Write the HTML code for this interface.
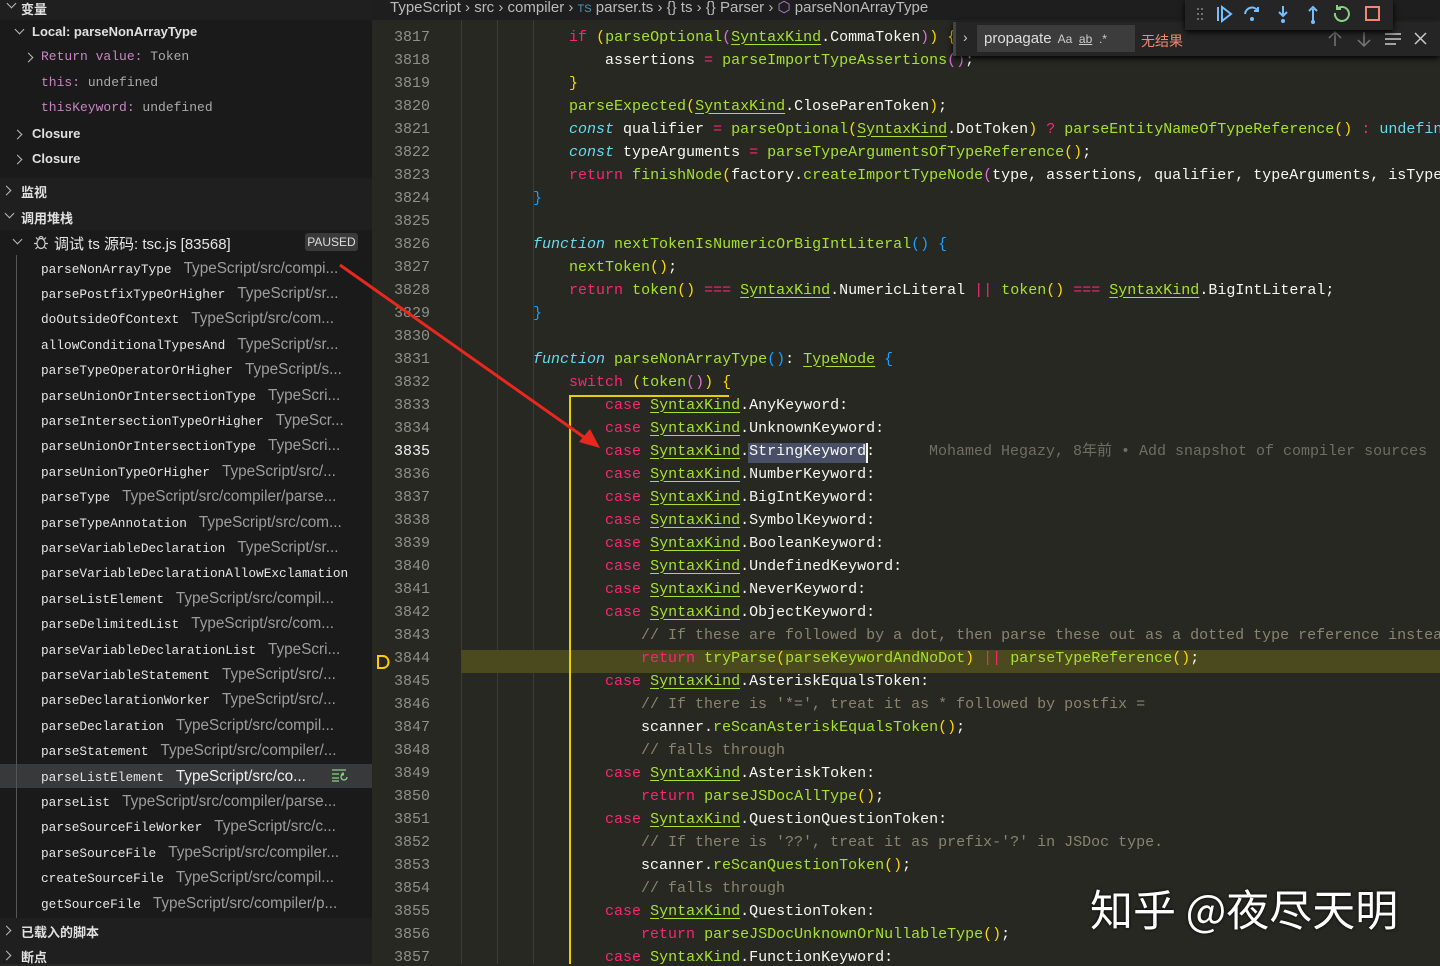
<!DOCTYPE html>
<html><head><meta charset="utf-8">
<style>
*{margin:0;padding:0;box-sizing:border-box}
body{width:1440px;height:964px;overflow:hidden;background:#272822;position:relative;font-family:"Liberation Sans","Noto Sans CJK SC",sans-serif}
#side{position:absolute;left:0;top:0;width:372px;height:964px;background:#1f1f1f}
.a{position:absolute;white-space:pre}
.h{font-weight:bold;font-size:13px;color:#e0e0e0}
.chev{position:absolute;width:7px;height:7px;border-right:1.5px solid #bbb;border-bottom:1.5px solid #bbb}
.cr{transform:rotate(-45deg)}
.cd{transform:rotate(45deg)}
.m{font-family:"Liberation Mono",monospace}
.it{position:absolute;left:41px;height:25px;line-height:25px;white-space:pre;font-size:15.3px;color:#9d9d9d}
.it b{font-weight:normal;font-family:"Liberation Mono",monospace;font-size:12.8px;color:#e6e6e6;margin-right:12px}
#ed{position:absolute;left:372px;top:20px;width:1068px;height:944px;background:#272822;overflow:hidden}
.ln{position:absolute;left:0;width:58px;text-align:right;font-family:"Liberation Mono",monospace;font-size:15px;color:#8f908a;height:23px;line-height:23px}
.cl{position:absolute;left:89px;font-family:"Liberation Mono",monospace;font-size:15px;color:#f8f8f2;height:23px;line-height:23px;white-space:pre}
.k{color:#f92672}.f{color:#a6e22e}.c{color:#66d9ef;font-style:italic}.s{color:#a6e22e;text-decoration:underline;text-decoration-color:#a6e22e;text-underline-offset:3px}
.y{color:#ffd700}.p{color:#da70d6}.g{color:#88846f}.b{color:#179fff}
</style></head><body>
<div id="side">
 <div style="position:absolute;left:0;top:20px;width:372px;height:158px;background:#1a1a1a"></div>
 <div style="position:absolute;left:0;top:230px;width:372px;height:688px;background:#1a1a1a"></div>
 <div style="position:absolute;left:0;top:764px;width:372px;height:24px;background:#37393a"></div>
 <div style="position:absolute;left:16px;top:255px;width:1px;height:663px;background:#555"></div>
 <div class="chev cd" style="left:8px;top:0px"></div><div class="a h" style="left:21px;top:-1px">变量</div>
 <div class="chev cd" style="left:16px;top:26px"></div><div class="a h" style="left:32px;top:24px">Local: parseNonArrayType</div>
 <div class="chev cr" style="left:25px;top:54px"></div><div class="a m" style="left:41px;top:49px;font-size:13px"><span style="color:#c586c0">Return value:</span><span style="color:#aaa"> Token</span></div>
 <div class="a m" style="left:41px;top:75px;font-size:13px"><span style="color:#c586c0">this:</span><span style="color:#aaa"> undefined</span></div>
 <div class="a m" style="left:41px;top:100px;font-size:13px"><span style="color:#c586c0">thisKeyword:</span><span style="color:#aaa"> undefined</span></div>
 <div class="chev cr" style="left:14px;top:131px"></div><div class="a h" style="left:32px;top:126px">Closure</div>
 <div class="chev cr" style="left:14px;top:156px"></div><div class="a h" style="left:32px;top:151px">Closure</div>
 <div class="chev cr" style="left:3px;top:187px"></div><div class="a h" style="left:21px;top:182px">监视</div>
 <div class="chev cd" style="left:6px;top:210px"></div><div class="a h" style="left:21px;top:208px">调用堆栈</div>
 <div class="chev cd" style="left:14px;top:236px"></div>
 <svg style="position:absolute;left:33px;top:234px" width="16" height="16" viewBox="0 0 16 16" fill="none" stroke="#ccc" stroke-width="1.2"><ellipse cx="8" cy="9.5" rx="4" ry="5"/><path d="M5 5.5l-2-2M11 5.5l2-2M4 9.5H1M12 9.5h3M4.5 13l-2 2M11.5 13l2 2M6 4.5a2 2 0 0 1 4 0"/></svg>
 <div class="a" style="left:54px;top:233px;font-size:15px;color:#e6e6e6">调试 ts 源码: tsc.js [83568]</div>
 <div class="a" style="left:305px;top:233px;width:53px;height:18px;background:#3a3a3a;border-radius:3px;font-size:12px;color:#ddd;text-align:center;line-height:18px">PAUSED</div>
 <div class="it" style="top:256px"><b>parseNonArrayType</b>TypeScript/src/compi...</div>
 <div class="it" style="top:281px"><b>parsePostfixTypeOrHigher</b>TypeScript/sr...</div>
 <div class="it" style="top:306px"><b>doOutsideOfContext</b>TypeScript/src/com...</div>
 <div class="it" style="top:332px"><b>allowConditionalTypesAnd</b>TypeScript/sr...</div>
 <div class="it" style="top:357px"><b>parseTypeOperatorOrHigher</b>TypeScript/s...</div>
 <div class="it" style="top:383px"><b>parseUnionOrIntersectionType</b>TypeScri...</div>
 <div class="it" style="top:408px"><b>parseIntersectionTypeOrHigher</b>TypeScr...</div>
 <div class="it" style="top:433px"><b>parseUnionOrIntersectionType</b>TypeScri...</div>
 <div class="it" style="top:459px"><b>parseUnionTypeOrHigher</b>TypeScript/src/...</div>
 <div class="it" style="top:484px"><b>parseType</b>TypeScript/src/compiler/parse...</div>
 <div class="it" style="top:510px"><b>parseTypeAnnotation</b>TypeScript/src/com...</div>
 <div class="it" style="top:535px"><b>parseVariableDeclaration</b>TypeScript/sr...</div>
 <div class="it" style="top:560px"><b>parseVariableDeclarationAllowExclamation</b></div>
 <div class="it" style="top:586px"><b>parseListElement</b>TypeScript/src/compil...</div>
 <div class="it" style="top:611px"><b>parseDelimitedList</b>TypeScript/src/com...</div>
 <div class="it" style="top:637px"><b>parseVariableDeclarationList</b>TypeScri...</div>
 <div class="it" style="top:662px"><b>parseVariableStatement</b>TypeScript/src/...</div>
 <div class="it" style="top:687px"><b>parseDeclarationWorker</b>TypeScript/src/...</div>
 <div class="it" style="top:713px"><b>parseDeclaration</b>TypeScript/src/compil...</div>
 <div class="it" style="top:738px"><b>parseStatement</b>TypeScript/src/compiler/...</div>
 <div class="it" style="top:764px;color:#eee"><b>parseListElement</b>TypeScript/src/co...</div>
 <svg style="position:absolute;left:331px;top:768px" width="18" height="14" viewBox="0 0 18 14" fill="none" stroke="#89d185" stroke-width="1.3"><path d="M1 2h14M1 6h7M1 10h7M1 13h7"/><path d="M16 9a3 3 0 1 1-3-3h-2l1.5-1.5M11 6l1.5 1.5"/></svg>
 <div class="it" style="top:789px"><b>parseList</b>TypeScript/src/compiler/parse...</div>
 <div class="it" style="top:814px"><b>parseSourceFileWorker</b>TypeScript/src/c...</div>
 <div class="it" style="top:840px"><b>parseSourceFile</b>TypeScript/src/compiler...</div>
 <div class="it" style="top:865px"><b>createSourceFile</b>TypeScript/src/compil...</div>
 <div class="it" style="top:891px"><b>getSourceFile</b>TypeScript/src/compiler/p...</div>
 <div class="chev cr" style="left:3px;top:927px"></div><div class="a h" style="left:21px;top:922px">已载入的脚本</div>
 <div class="chev cr" style="left:3px;top:952px"></div><div class="a h" style="left:21px;top:947px">断点</div>
</div>

<div style="position:absolute;left:372px;top:0;width:1068px;height:20px;background:#1e1e1e"></div>
<div class="a" style="left:390px;top:-2px;font-size:15px;color:#bbb">TypeScript &#x203A; src &#x203A; compiler &#x203A; <span style="color:#519aba;font-size:11px">TS</span> parser.ts &#x203A; {} ts &#x203A; {} Parser &#x203A; <span style="color:#b180d7">&#x2B21;</span> parseNonArrayType</div>

<div id="ed">
 <div style="position:absolute;left:89px;top:0;width:1px;height:944px;background:#3b3c35"></div>
 <div style="position:absolute;left:125px;top:0;width:1px;height:944px;background:#3b3c35"></div>
 <div style="position:absolute;left:161px;top:0;width:1px;height:944px;background:#3b3c35"></div>
 <div style="position:absolute;left:89px;top:630px;width:979px;height:23px;background:#4b4a1e"></div>
 <div style="position:absolute;left:376px;top:423px;width:120px;height:20px;background:#4a4f68"></div>
 <div style="position:absolute;left:494px;top:423px;width:2px;height:20px;background:#f8f8f0"></div>
 <div style="position:absolute;left:197px;top:375px;width:2px;height:570px;background:#e6d000"></div>
 <div style="position:absolute;left:197px;top:375px;width:160px;height:2px;background:#e6d000"></div>
 <svg style="position:absolute;left:4px;top:634px" width="14" height="16" viewBox="0 0 14 16"><path d="M2 2h5a5.5 6 0 0 1 0 12H2z" fill="none" stroke="#ffcc00" stroke-width="2"/></svg>
 <div id="lines"></div>
</div>

<script>
const L=[
['   <span class="k">if</span> <span class="y">(</span><span class="f">parseOptional</span><span class="p">(</span><span class="s">SyntaxKind</span>.CommaToken<span class="p">)</span><span class="y">)</span> <span class="y">{</span>'],
['    assertions <span class="k">=</span> <span class="f">parseImportTypeAssertions</span><span class="p">()</span>;'],
['   <span class="y">}</span>'],
['   <span class="f">parseExpected</span><span class="y">(</span><span class="s">SyntaxKind</span>.CloseParenToken<span class="y">)</span>;'],
['   <span class="c">const</span> qualifier <span class="k">=</span> <span class="f">parseOptional</span><span class="y">(</span><span class="s">SyntaxKind</span>.DotToken<span class="y">)</span> <span class="k">?</span> <span class="f">parseEntityNameOfTypeReference</span><span class="y">()</span> <span class="k">:</span> <span class="c" style="font-style:normal">undefined</span>;'],
['   <span class="c">const</span> typeArguments <span class="k">=</span> <span class="f">parseTypeArgumentsOfTypeReference</span><span class="y">()</span>;'],
['   <span class="k">return</span> <span class="f">finishNode</span><span class="y">(</span>factory.<span class="f">createImportTypeNode</span><span class="p">(</span>type, assertions, qualifier, typeArguments, isTypeOf<span class="p">)</span>, pos<span class="y">)</span>;'],
['  <span class="b">}</span>'],
[''],
['  <span class="c">function</span> <span class="f">nextTokenIsNumericOrBigIntLiteral</span><span class="b">()</span> <span class="b">{</span>'],
['   <span class="f">nextToken</span><span class="y">()</span>;'],
['   <span class="k">return</span> <span class="f">token</span><span class="y">()</span> <span class="k">===</span> <span class="s">SyntaxKind</span>.NumericLiteral <span class="k">||</span> <span class="f">token</span><span class="y">()</span> <span class="k">===</span> <span class="s">SyntaxKind</span>.BigIntLiteral;'],
['  <span class="b">}</span>'],
[''],
['  <span class="c">function</span> <span class="f">parseNonArrayType</span><span class="b">()</span>: <span class="s">TypeNode</span> <span class="b">{</span>'],
['   <span class="k">switch</span> <span class="y">(</span><span class="f">token</span><span class="p">()</span><span class="y">)</span> <span class="y">{</span>'],
];
["AnyKeyword","UnknownKeyword","StringKeyword","NumberKeyword","BigIntKeyword","SymbolKeyword","BooleanKeyword","UndefinedKeyword","NeverKeyword","ObjectKeyword"].forEach(k=>L.push(['    <span class="k">case</span> <span class="s">SyntaxKind</span>.'+k+':']));
const cs=k=>['    <span class="k">case</span> <span class="s">SyntaxKind</span>.'+k+':'];
L.push(['     <span class="g">// If these are followed by a dot, then parse these out as a dotted type reference instead.</span>']);
L.push(['     <span class="k">return</span> <span class="f">tryParse</span><span class="y">(</span><span class="f">parseKeywordAndNoDot</span><span class="y">)</span> <span class="k">||</span> <span class="f">parseTypeReference</span><span class="y">()</span>;']);
L.push(cs('AsteriskEqualsToken'));
L.push(['     <span class="g">// If there is \'*=\', treat it as * followed by postfix =</span>']);
L.push(['     scanner.<span class="f">reScanAsteriskEqualsToken</span><span class="y">()</span>;']);
L.push(['     <span class="g">// falls through</span>']);
L.push(cs('AsteriskToken'));
L.push(['     <span class="k">return</span> <span class="f">parseJSDocAllType</span><span class="y">()</span>;']);
L.push(cs('QuestionQuestionToken'));
L.push(['     <span class="g">// If there is \'??\', treat it as prefix-\'?\' in JSDoc type.</span>']);
L.push(['     scanner.<span class="f">reScanQuestionToken</span><span class="y">()</span>;']);
L.push(['     <span class="g">// falls through</span>']);
L.push(cs('QuestionToken'));
L.push(['     <span class="k">return</span> <span class="f">parseJSDocUnknownOrNullableType</span><span class="y">()</span>;']);
L.push(cs('FunctionKeyword'));
let h='';
L.forEach((l,i)=>{
 const top=5.5+23*i;
 let s=l[0].replace(/^( *)/,m=>' '.repeat(m.length*4));
 h+='<div class="ln" style="top:'+top+'px;'+(i==18?'color:#f0f0f0':'')+'">'+(3817+i)+'</div>';
 h+='<div class="cl" style="left:89px;top:'+top+'px">'+s+'</div>';
});
h+='<div class="cl" style="left:557px;top:'+(5.5+23*18)+'px;color:#6e6e64">Mohamed Hegazy, 8年前 • Add snapshot of compiler sources</div>';
document.getElementById('lines').innerHTML=h;
</script>

<!-- find widget -->
<div style="position:absolute;left:953px;top:22px;width:487px;height:34px;background:#252526;box-shadow:0 2px 6px #000"></div>
<div style="position:absolute;left:953px;top:22px;width:3px;height:34px;background:#444"></div>
<div class="a" style="left:963px;top:29px;font-size:14px;color:#ccc">&#x203A;</div>
<div style="position:absolute;left:977px;top:25px;width:158px;height:27px;background:#3c3c3c"></div>
<div class="a" style="left:984px;top:30px;font-size:15px;color:#ddd">propagate<span style="font-size:12px;color:#ccc">  Aa  <u>ab</u>  .*</span></div>
<div class="a" style="left:1141px;top:31px;font-size:14px;color:#f48771">无结果</div>
<svg style="position:absolute;left:1325px;top:29px" width="110" height="20" viewBox="0 0 110 20" fill="none" stroke-width="1.5"><path d="M10 17V3M4 9l6-6 6 6M39 3v14M33 11l6 6 6-6" stroke="#777"/><path d="M60 5h16M60 10h16M60 15h11M90 4l11 11M101 4L90 15" stroke="#ccc"/></svg>
<!-- debug toolbar -->
<div style="position:absolute;left:1185px;top:0;width:208px;height:30px;background:#252526;box-shadow:0 2px 6px #000"></div>
<svg style="position:absolute;left:1190px;top:2px" width="200" height="24" viewBox="0 0 200 24" fill="none" stroke-width="2">
<g fill="#888"><circle cx="8" cy="7" r="1"/><circle cx="12" cy="7" r="1"/><circle cx="8" cy="12" r="1"/><circle cx="12" cy="12" r="1"/><circle cx="8" cy="17" r="1"/><circle cx="12" cy="17" r="1"/></g>
<path d="M28 5v14M32 5l9 7-9 7z" stroke="#75beff"/>
<path d="M55 12a7 7 0 0 1 13-3M68 5v4h-4" stroke="#75beff"/><circle cx="62" cy="17" r="2" fill="#75beff" stroke="none"/>
<path d="M93 4v10M89 10l4 4 4-4" stroke="#75beff"/><circle cx="93" cy="19" r="2" fill="#75beff" stroke="none"/>
<path d="M123 19V7M119 9l4-4 4 4" stroke="#75beff"/><circle cx="123" cy="20" r="2" fill="#75beff" stroke="none"/>
<path d="M147 7a7 7 0 1 1-2 4M147 3v4h4" stroke="#89d185"/>
<rect x="176" y="5" width="13" height="13" stroke="#f48771"/>
</svg>
<!-- arrow -->
<svg style="position:absolute;left:0;top:0" width="1440" height="964"><path d="M340 265L588 440" stroke="#e8281e" stroke-width="3"/><path d="M600 448L579 442 590 429z" fill="#e8281e"/></svg>
<div class="a" style="left:1090px;top:877px;font-size:43px;color:#fff;font-family:'Noto Sans CJK SC',sans-serif;text-shadow:0 0 3px #000">知乎 @夜尽天明</div>
</body></html>
